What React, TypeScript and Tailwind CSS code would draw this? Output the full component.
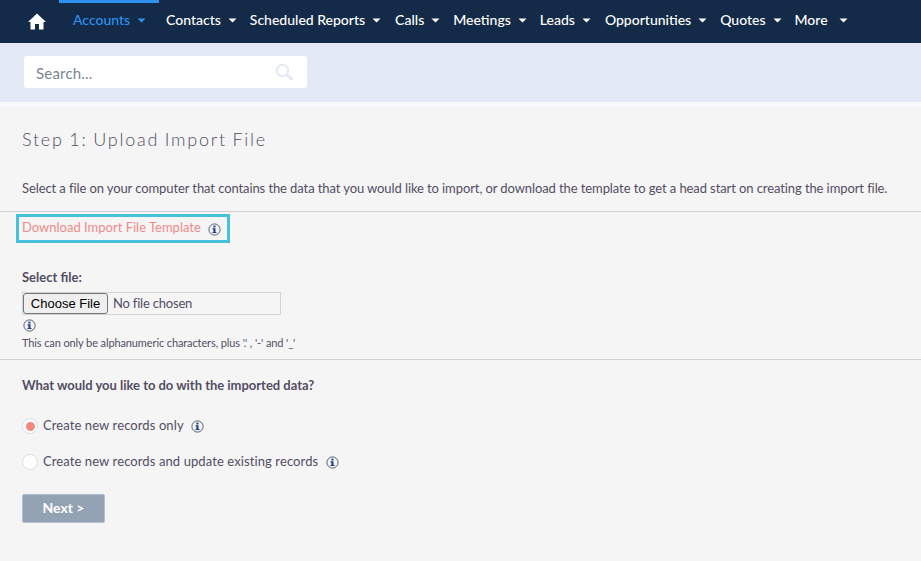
import React from "react";

const Caret = ({ className = "" }: { className?: string }) => (
  <svg width="9" height="5" viewBox="0 0 9 5" className={className} aria-hidden="true">
    <path d="M0.5 0.5h8L4.5 4.5z" fill="currentColor" />
  </svg>
);

const Info = ({ className = "" }: { className?: string }) => (
  <svg width="13" height="13" viewBox="0 0 13 13" className={className} aria-hidden="true">
    <circle cx="6.5" cy="6.5" r="5.6" fill="#f5f5f5" stroke="#55606e" strokeWidth="1" />
    <rect x="5.4" y="2.6" width="2.1" height="1.9" fill="#1c3f94" />
    <path d="M4.5 5.3h3v3.6h1v1.2H4.4V8.9h1V6.5h-.9z" fill="#1c3f94" />
  </svg>
);

const items: [string, string][] = [
  ["Contacts", "mr-[13px]"],
  ["Scheduled Reports", "mr-[14px]"],
  ["Calls", "mr-[13px]"],
  ["Meetings", "mr-[13px]"],
  ["Leads", "mr-[14px]"],
  ["Opportunities", "mr-[13px]"],
  ["Quotes", "mr-[13px]"],
];

export default function App() {
  return (
    <div className="min-h-[561px] bg-[#f5f5f5] font-['Lato','Liberation_Sans',sans-serif] text-[#534d64] overflow-hidden">
      <nav className="h-[43px] bg-[#132b48] flex items-stretch text-white text-[14px] font-medium whitespace-nowrap">
        <div className="w-[59px] flex items-center pl-[28px] pb-[1px]">
          <svg width="18" height="17" viewBox="0 0 18 17" aria-hidden="true">
            <path d="M9 0.5 L18 9 H15.5 V16.5 H11 V11 H7 V16.5 H2.5 V9 H0 Z" fill="#ffffff" />
          </svg>
        </div>
        <div className="w-[100px] mr-[7px] border-t-[3px] border-[#2e90f0] text-[#2e90f0] flex items-center pl-[14px] pb-[7px]">
          <span>Accounts</span>
          <Caret className="ml-[7px] mt-[1px]" />
        </div>
        {items.map(([label, margin]) => (
          <div key={label} className={`flex items-center pb-[4px] ${margin}`}>
            <span>{label}</span>
            <Caret className="ml-[7px] mt-[1px]" />
          </div>
        ))}
        <div className="flex items-center pb-[4px]">
          <span>More</span>
          <Caret className="ml-[11px] mt-[1px]" />
        </div>
      </nav>

      <div className="h-[59px] bg-[#e3e9f5] pt-[13px] pl-[24px]">
        <div className="w-[283px] h-[32px] bg-white rounded-[3px] flex items-center justify-between pl-[12px] pr-[13px]">
          <span className="text-[15px] tracking-[0.2px] text-[#7b8594] pt-[2px]">Search...</span>
          <svg width="19" height="19" viewBox="0 0 19 19" fill="none" aria-hidden="true">
            <circle cx="7.5" cy="7.5" r="5.7" stroke="#e3e9f5" strokeWidth="2" />
            <path d="M12 12l5.5 4.8" stroke="#e3e9f5" strokeWidth="3" />
          </svg>
        </div>
      </div>

      <div className="h-[5px] bg-[#f8f9fc]" />

      <main>
        <h1 className="pl-[22px] pt-[21px] text-[18px] leading-[22px] font-light tracking-[1.75px] [word-spacing:-1px] text-[#534d64]">
          Step 1: Upload Import File
        </h1>
        <p className="pl-[22px] mt-[29px] text-[13px] leading-[18px] tracking-[-0.094px] whitespace-nowrap">
          Select a file on your computer that contains the data that you would like to import, or download the template to get a head start on creating the import file.
        </p>
        <div className="mt-[14px] h-px bg-[#cfd1d4]" />

        <div className="ml-[16px] mt-[2px] w-[214px] h-[29px] border-[3px] border-[#45c2d9] flex items-center pl-[3px]">
          <a href="#" className="text-[13px] text-[#f08a8a] whitespace-nowrap pb-[2px]">Download Import File Template</a>
          <Info className="ml-[7px] mt-[1px]" />
        </div>

        <div className="pl-[22px] mt-[25px]">
          <label className="block text-[13px] leading-[18px] font-bold">Select file:</label>
          <input
            type="file"
            className="block mt-[6px] w-[259px] h-[23px] border border-[#cfd4db] text-[13px] tracking-[-0.2px] file:font-['Liberation_Sans',sans-serif] file:tracking-normal file:text-black file:text-[13px] file:h-[21px] file:w-[85px] file:mr-[5px] file:bg-[#efefef] file:border file:border-[#767676] file:rounded-[3px]"
          />
          <Info className="block mt-[4px] ml-[1px]" />
          <p className="mt-[4px] text-[11px] leading-[14px] tracking-[-0.11px] whitespace-nowrap">This can only be alphanumeric characters, plus '.' , '-' and '_'</p>
        </div>
        <div className="mt-[9px] h-px bg-[#cfd1d4]" />

        <div className="pl-[22px]">
          <p className="mt-[16px] text-[13px] leading-[18px] font-bold tracking-[-0.02px]">What would you like to do with the imported data?</p>
          <div className="mt-[23px] flex items-center h-[18px]">
            <span className="w-[16px] h-[16px] rounded-full bg-white border border-[#d8dde6] flex items-center justify-center">
              <span className="w-[9px] h-[9px] rounded-full bg-[#f08a80]" />
            </span>
            <span className="ml-[5px] text-[13px] tracking-[0.1px]">Create new records only</span>
            <Info className="ml-[7px]" />
          </div>
          <div className="mt-[18px] flex items-center h-[18px]">
            <span className="w-[16px] h-[16px] rounded-full bg-white border border-[#d8dde6]" />
            <span className="ml-[5px] text-[13px] tracking-[0.1px]">Create new records and update existing records</span>
            <Info className="ml-[8px]" />
          </div>
          <button className="mt-[23px] w-[83px] h-[29px] pb-[2px] bg-[#94a3b3] border border-[#b5c0cc] rounded-[2px] text-white text-[14px] font-bold">
            Next &gt;
          </button>
        </div>
      </main>
    </div>
  );
}
